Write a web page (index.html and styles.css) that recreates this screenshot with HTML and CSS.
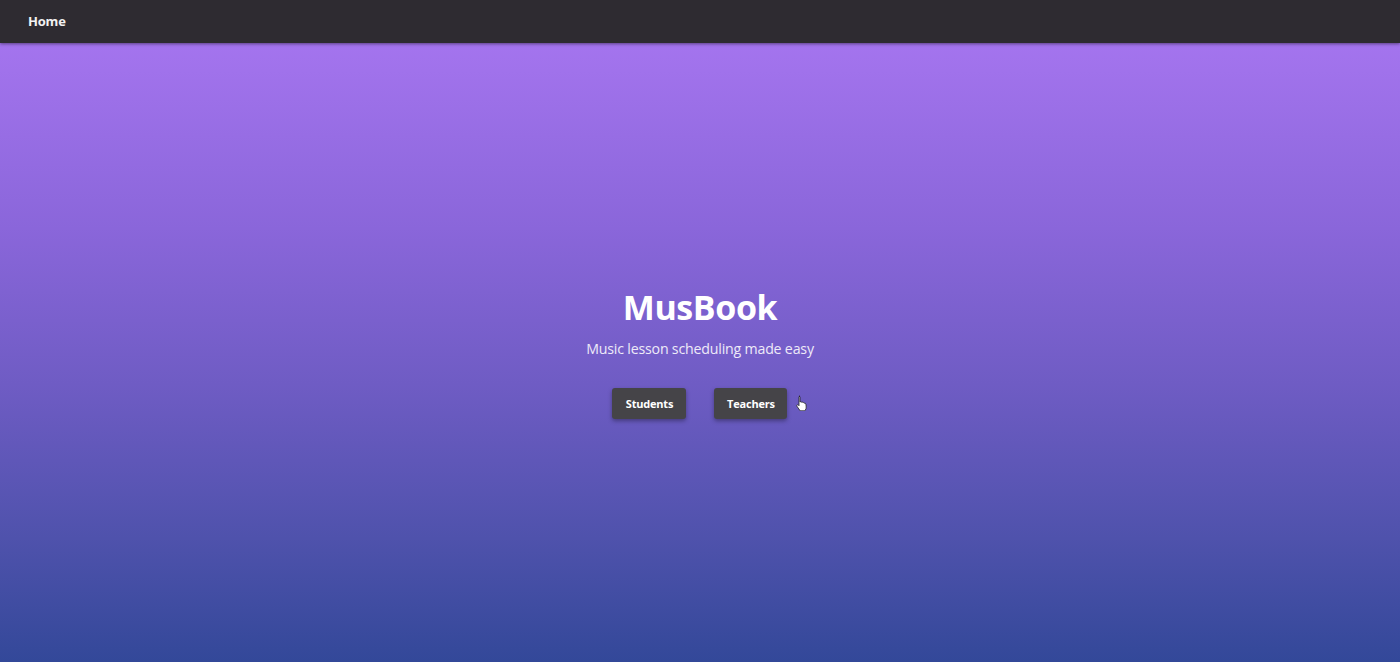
FILE: index.html
```html
<!DOCTYPE html>
<html lang="en">
<head>
<meta charset="utf-8">
<title>MusBook</title>
<link rel="stylesheet" href="styles.css">
</head>
<body>
<nav class="navbar">
  <a class="nav-link" href="#">Home</a>
</nav>
<main class="hero">
  <div class="hero-content">
    <h1 class="title">MusBook</h1>
    <p class="subtitle">Music lesson scheduling made easy</p>
    <div class="actions">
      <button class="btn">Students</button>
      <span class="btn-wrap">
        <button class="btn btn-narrow">Teachers</button>
        <svg class="cursor" width="14" height="16" viewBox="0 0 14 16">
          <path d="M4 1.2c.6 0 1 .4 1 1V7l.2-.1c.5-.4 1.3-.2 1.5.4.5-.4 1.3-.2 1.5.4.5-.3 1.3 0 1.4.6.5-.2 1.2.1 1.3.7l.3 3c.1 1.2-.3 2.3-1 3.2l-.4.6H5.2l-.6-.8L2 11.3c-.4-.5-.3-1.1.2-1.4.4-.3 1-.2 1.3.2l.5.6V2.2c0-.6.4-1 1-1z" fill="#fff" stroke="#222" stroke-width="0.8" stroke-linejoin="round"/>
        </svg>
      </span>
    </div>
  </div>
</main>
</body>
</html>
```
FILE: styles.css
```css
* { box-sizing: border-box; }
html, body {
  margin: 0;
  padding: 0;
  height: 100%;
}
body {
  font-family: "Open Sans", "Noto Sans", "Liberation Sans", sans-serif;
  background: #34489c;
  display: flex;
  flex-direction: column;
  min-height: 662px;
}
.navbar {
  height: 43px;
  flex: 0 0 43px;
  background: #2e2b31;
  display: flex;
  align-items: center;
  padding: 0 0 2px 28px;
  box-shadow: 0 1px 3px rgba(0,0,0,0.45);
  position: relative;
  z-index: 1;
}
.nav-link {
  color: #f2f2f2;
  font-weight: 700;
  font-size: 13px;
  text-decoration: none;
  letter-spacing: -0.2px;
}
.hero {
  flex: 1;
  background: linear-gradient(to bottom, #a474ee 0%, #8a66da 30%, #6f5cc4 55%, #4f52ac 80%, #334899 100%);
  display: flex;
  align-items: center;
  justify-content: center;
}
.hero-content {
  display: flex;
  flex-direction: column;
  align-items: center;
  margin-top: -2px;
}
.title {
  margin: 0;
  color: #fff;
  font-size: 34px;
  font-weight: 700;
  line-height: 44px;
  letter-spacing: -0.4px;
}
.subtitle {
  margin: 10px 0 0;
  color: #eeeaf8;
  font-size: 14.2px;
  line-height: 20px;
  letter-spacing: -0.2px;
}
.actions {
  display: flex;
  gap: 28px;
  margin-top: 29px;
}
.btn-wrap {
  position: relative;
  display: inline-flex;
}
.btn {
  font-family: inherit;
  background: #454448;
  color: #fff;
  border: none;
  border-radius: 3px;
  width: 74px;
  height: 31px;
  font-size: 11px;
  font-weight: 700;
  letter-spacing: -0.2px;
  box-shadow: 0 2px 4px rgba(0,0,0,0.35);
  padding: 0;
  cursor: pointer;
}
.btn-narrow {
  width: 73px;
}
.cursor {
  position: absolute;
  left: 81px;
  top: 7px;
}
```
